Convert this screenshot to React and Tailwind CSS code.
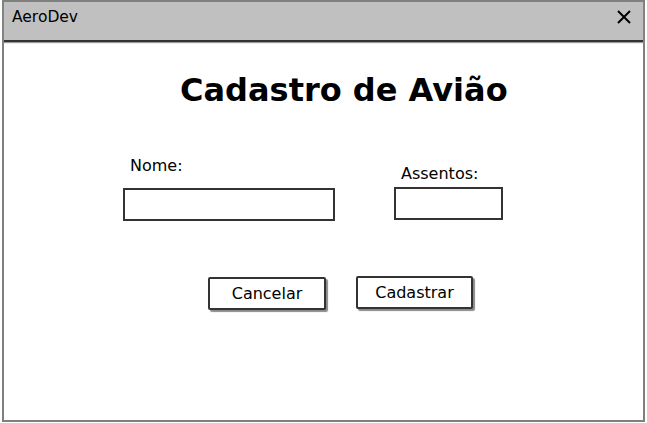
import React, { useState } from "react";

const App = () => {
  const [nome, setNome] = useState("");
  const [assentos, setAssentos] = useState("");

  return (
    <div className="bg-white w-[647px] h-[423px] font-['DejaVu_Sans',sans-serif] text-black">
      <div className="ml-[2px] w-[643px] h-[422px] border-2 border-[#808080] flex flex-col">
        {/* title bar */}
        <div className="h-[40px] bg-[#c0c0c0] border-b-2 border-[#333] shadow-[0_1px_1px_#999] flex items-start justify-between pl-[8px] pr-[12px] pt-[6px]">
          <span className="text-[15.5px] leading-[19px]">AeroDev</span>
          <button className="mt-[2px]">
            <svg width="14" height="14" viewBox="0 0 14 14">
              <path d="M1 1L13 13M13 1L1 13" stroke="#000" strokeWidth="2" />
            </svg>
          </button>
        </div>

        <h1 className="mt-[30px] pl-[176px] text-[32px] leading-[37px] font-bold">
          Cadastro de Avião
        </h1>

        <div className="mt-[47px] pl-[119px] flex items-start gap-[59px]">
          <div className="flex flex-col">
            <label className="pl-[7px] text-[16px] leading-[19px] mb-[13px]">Nome:</label>
            <input
              value={nome}
              onChange={(e) => setNome(e.target.value)}
              className="w-[212px] h-[33px] border-2 border-[#333] bg-white px-2 outline-none"
            />
          </div>
          <div className="flex flex-col mt-[8px]">
            <label className="pl-[7px] text-[16px] leading-[19px] mb-[4px]">Assentos:</label>
            <input
              value={assentos}
              onChange={(e) => setAssentos(e.target.value)}
              className="w-[109px] h-[33px] border-2 border-[#333] bg-white px-2 outline-none"
            />
          </div>
        </div>

        <div className="mt-[55px] pl-[204px] flex items-start gap-[30px]">
          <button className="mt-[1px] w-[118px] h-[33px] border-2 border-[#333] rounded-[2px] bg-white text-[16px] shadow-[2px_2px_1px_#8a8a8a]">
            Cancelar
          </button>
          <button className="w-[117px] h-[33px] border-2 border-[#333] rounded-[2px] bg-white text-[16px] shadow-[2px_2px_1px_#8a8a8a]">
            Cadastrar
          </button>
        </div>
      </div>
    </div>
  );
};

export default App;
